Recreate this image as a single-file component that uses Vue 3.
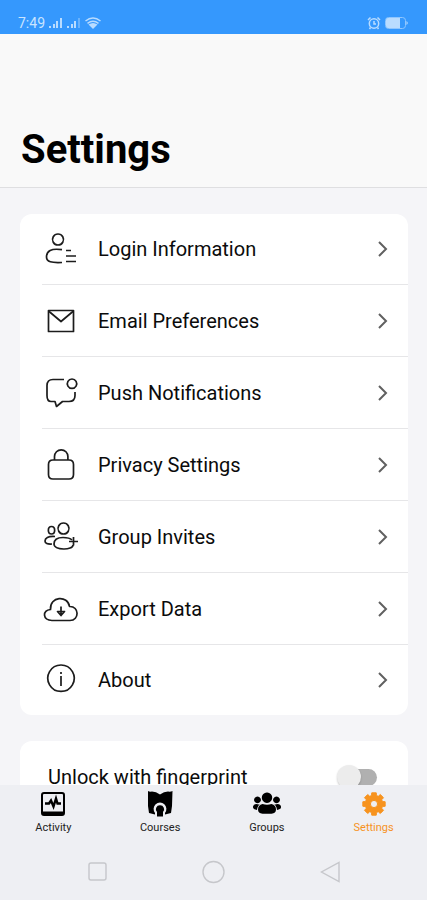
<template>
  <div class="screen">
    <div class="status-bar">
      <div class="status-group">
        <span class="clock">7:49</span>
        <svg class="signal" width="14" height="12" viewBox="0 0 14 12">
          <path d="M0 9h2v2H0zM4 7h2v4H4zM7 4h2v7H7zM11 1h2v10h-2z" />
        </svg>
        <svg class="signal" width="14" height="12" viewBox="0 0 14 12">
          <path d="M0 9h2v2H0zM4 7h2v4H4zM7 4h2v7H7z" />
          <path d="M11 1h2v10h-2z" opacity="0.4" />
        </svg>
        <svg class="wifi" width="16" height="12" viewBox="0 0 16 12">
          <path class="wifi-fill" d="M3.500 7.500Q8 4.500 12.500 7.500L8 12z" />
          <path d="M.5 4Q8-2 15.500 4M2.500 6.300Q8 2 13.500 6.300" />
        </svg>
      </div>
      <div class="status-group">
        <svg class="alarm" width="14" height="14" viewBox="0 0 14 14">
          <circle cx="7" cy="7.500" r="4.700" />
          <path d="M7 5v3h2M1 4l2.500-2.500M13 4l-2.500-2.500M3.500 11.500L2.500 13M10.500 11.500l1 1.500" />
        </svg>
        <svg class="battery" width="24" height="12" viewBox="0 0 24 12">
          <rect x="0.500" y="0.500" width="20" height="11" rx="3" fill="none" stroke="#8fc6ff" />
          <path d="M3 1h12v10H3q-2 0-2-2V3Q1 1 3 1zM21.500 4q2.500 2 0 4z" />
        </svg>
      </div>
    </div>

    <header class="header">
      <h1>Settings</h1>
    </header>

    <main class="content">
      <ul class="card">
        <li v-for="item in items" :key="item.label">
          <button type="button" class="row">
            <svg class="row-icon" width="36" height="36" viewBox="0 0 36 36">
              <path v-for="(d, i) in item.paths" :key="i" :d="d" />
            </svg>
            <span class="row-label">{{ item.label }}</span>
            <svg class="chevron" width="12" height="18" viewBox="0 0 12 18">
              <path d="M2 2l7 7-7 7" />
            </svg>
          </button>
        </li>
      </ul>

      <div class="card">
        <label class="toggle-row" for="fingerprint">
          <span>Unlock with fingerprint</span>
          <input id="fingerprint" v-model="fingerprint" class="switch" type="checkbox" role="switch" />
        </label>
      </div>
    </main>

    <nav class="tabs">
      <button
        v-for="tab in tabs"
        :key="tab.label"
        type="button"
        class="tab"
        :class="{ 'is-active': tab.label === activeTab }"
        @click="activeTab = tab.label"
      >
        <svg width="28" height="26" viewBox="0 0 28 26">
          <path :d="tab.path" fill-rule="evenodd" />
          <path v-if="tab.gap" class="tab-gap" :d="tab.gap" />
          <path v-if="tab.badge" :d="tab.badge" />
          <path v-if="tab.line" class="tab-line" :d="tab.line" />
        </svg>
        <span>{{ tab.label }}</span>
      </button>
    </nav>

    <div class="system-nav">
      <button type="button" aria-label="Recent apps">
        <svg width="24" height="24" viewBox="0 0 24 24"><rect x="4" y="3" width="17" height="17" rx="2" /></svg>
      </button>
      <button type="button" aria-label="Home">
        <svg width="24" height="24" viewBox="0 0 24 24"><circle cx="12.500" cy="12" r="10.500" /></svg>
      </button>
      <button type="button" aria-label="Back">
        <svg width="24" height="24" viewBox="0 0 24 24"><path d="M21 2.500v19L3.500 12z" /></svg>
      </button>
    </div>
  </div>
</template>

<script setup>
import { ref } from 'vue'

const fingerprint = ref(false)
const activeTab = ref('Settings')

const items = [
  {
    label: 'Login Information',
    paths: [
      'M15 3a5.500 5.500 0 1 0 .01 0z',
      'M19 18.700C8 17 3.500 20 3.500 26c0 5 5 6 15.500 5.500',
      'M23 19.500h5M23 25h10M23 30.500h10'
    ]
  },
  {
    label: 'Email Preferences',
    paths: ['M5.500 7.500h25v21h-25z', 'M5.500 8L18 18.500 30.500 8']
  },
  {
    label: 'Push Notifications',
    paths: [
      'M21 4.500H10Q4 4.500 4 10.500v10Q4 26.500 8 26.500h4l1.500 5 6-5H26q6 0 6-6V17',
      'M29 4a4.700 4.700 0 1 0 .01 0z'
    ]
  },
  {
    label: 'Privacy Settings',
    paths: [
      'M10 13h16q4.500 0 4.500 4.500v10Q30.500 32 26 32H10q-4.500 0-4.500-4.500v-10Q5.500 13 10 13z',
      'M11.500 13V9.500a6.700 6.700 0 0 1 13.400 0V13'
    ]
  },
  {
    label: 'Group Invites',
    paths: [
      'M20.500 4a5.500 5.500 0 1 0 .01 0z',
      'M8.500 7.500c-4.200 0-4.200 7.500 0 7.500s4.200-7.500 0-7.500z',
      'M12 17.500C5 17 2 19 2 22q0 3.500 7 3',
      'M29 21c-2-2-5-2.500-9-2.500-6 0-9 2.500-9 6.500 0 6.500 19 6.500 19 1',
      'M30.500 18v8.500M26 22.500h9'
    ]
  },
  {
    label: 'Export Data',
    paths: [
      'M9 29.500C-.5 29.500-1 19 7.500 18.500 6.500 5 25 4 26.500 15.500c10-.5 10 14 .5 14z',
      'M18 15.500v8M14.500 20.500l3.500 4 3.500-4z'
    ]
  },
  {
    label: 'About',
    paths: ['M18 3a13.200 13.200 0 1 0 .01 0z', 'M18 14v10M18 10v2']
  }
]

// cog outline: eight teeth around a ring, with the hub cut out
function gearPath(cx, cy, outer, inner, hole) {
  const pts = []
  for (let i = 0; i < 8; i++) {
    const a = (i * Math.PI) / 4
    for (const [r, off] of [[inner, -0.28], [outer, -0.2], [outer, 0.2], [inner, 0.28]]) {
      pts.push(`${(cx + r * Math.cos(a + off)).toFixed(2)} ${(cy + r * Math.sin(a + off)).toFixed(2)}`)
    }
  }
  return `M${pts.join('L')}z M${cx - hole} ${cy}a${hole} ${hole} 0 1 0 ${hole * 2} 0a${hole} ${hole} 0 1 0 ${-hole * 2} 0z`
}

const tabs = [
  {
    label: 'Activity',
    path: 'M5 1h18q3 0 3 3v18q0 3-3 3H5q-3 0-3-3V4q0-3 3-3zM5 3q-1 0-1 1v16.500h20V4q0-1-1-1z',
    line: 'M6 12.500h4l2-3 2.500 6 2.500-8 1.500 5H22'
  },
  {
    label: 'Courses',
    path: 'M2 0q1.500 1 4 .5 4 0 8 3 4-3 8-3 2.500.5 4.500-.5L26 15l-1 7-6 1.500H9L3 22l-1-7z',
    gap: 'M9 25.500V22a6.400 6.400 0 1 1 10 0v3.500z',
    badge: 'M14 14.300a4 4 0 0 1 3 6.800V25.500h-6v-4.400a4 4 0 0 1 3-6.800z'
  },
  {
    label: 'Groups',
    path: 'M14 1.500a5.200 5.200 0 1 0 .01 0zM4.500 5.500a3.400 3.400 0 1 0 .01 0zM23.500 5.500a3.400 3.400 0 1 0 .01 0zM9.500 13q4.500 1.500 9 0 4.500 1 4.500 5.500 0 4-4.500 4.200h-9Q5 22.500 5 18.500 5 14 9.500 13zM3.500 13Q6 14 8 12.800 4.500 14 4 19-.5 18.500 0 15.500 .5 13 3.500 13zM24.500 13q-2.500 1-4.500-.2 3.500 1.200 4 6.200 4.500-.5 4-3.500-.5-2.500-3.500-2.500z'
  },
  {
    label: 'Settings',
    path: gearPath(14, 13, 11.4, 8.8, 3.6)
  }
]
</script>

<style>
body {
  margin: 0;
  background: #f5f5f8;
}
</style>

<style scoped>
.screen {
  display: flex;
  flex-direction: column;
  height: 100vh;
  background: #f5f5f8;
  color: #0b0b0b;
  font-family: Roboto, 'Liberation Sans', sans-serif;
}
button {
  margin: 0;
  padding: 0;
  border: 0;
  background: none;
  color: inherit;
  font: inherit;
  cursor: pointer;
}
.status-bar {
  flex: none;
  display: flex;
  align-items: flex-end;
  justify-content: space-between;
  box-sizing: border-box;
  height: 34px;
  padding: 0 18px 3px;
  background: #3598fd;
  color: #c9e4ff;
}
.status-group {
  display: flex;
  align-items: center;
  gap: 4px;
  height: 16px;
}
.clock {
  font-size: 14px;
  line-height: 16px;
}
.status-bar svg {
  fill: #b9dcff;
}
.status-bar .wifi,
.status-bar .alarm {
  fill: none;
  stroke: #b9dcff;
  stroke-width: 1.5;
}
.status-bar .wifi-fill {
  fill: #b9dcff;
  stroke: none;
}
.header {
  flex: none;
  display: flex;
  align-items: flex-end;
  box-sizing: border-box;
  height: 154px;
  padding: 0 21px 13px;
  border-bottom: 1px solid #dfdfe1;
  background: #f9f9f9;
}
h1 {
  margin: 0;
  color: #000;
  font-size: 40px;
  font-weight: 700;
  line-height: 48px;
}
.content {
  flex: 1;
  display: flex;
  flex-direction: column;
  gap: 26px;
  min-height: 0;
  padding: 26px 19px 0 20px;
  overflow-y: auto;
  scrollbar-width: none;
}
.card {
  flex: none;
  margin: 0;
  padding: 0;
  border-radius: 12px;
  background: #fff;
  list-style: none;
}
.card li {
  box-sizing: border-box;
  height: 72px;
  margin-left: 22px;
  border-bottom: 1px solid #e6e6e8;
}
.card li:first-child {
  height: 71px;
}
.card li:last-child {
  height: 70px;
  border-bottom: 0;
}
.row {
  display: flex;
  align-items: center;
  width: 100%;
  height: 100%;
  padding-right: 19px;
  text-align: left;
}
.row-icon {
  flex: none;
  margin-left: 1px;
  fill: none;
  stroke: #1c1c1c;
  stroke-width: 1.7;
  stroke-linejoin: round;
}
.row-label {
  flex: 1;
  margin-left: 19px;
  font-size: 20px;
  line-height: 24px;
}
.chevron {
  flex: none;
  fill: none;
  stroke: #606060;
  stroke-width: 2;
}
.toggle-row {
  display: flex;
  align-items: center;
  justify-content: space-between;
  height: 72px;
  padding: 0 31px 0 28px;
  font-size: 20px;
  line-height: 24px;
}
.switch {
  position: relative;
  appearance: none;
  width: 36px;
  height: 17px;
  margin: 0;
  border-radius: 9px;
  background: #b0b0b0;
  cursor: pointer;
}
.switch::before {
  content: '';
  position: absolute;
  top: -4px;
  left: -4px;
  width: 24px;
  height: 24px;
  border-radius: 50%;
  background: #ececec;
  box-shadow: 0 1px 2px rgba(0, 0, 0, 0.2);
}
.switch:checked::before {
  left: 16px;
}
.tabs {
  flex: none;
  display: grid;
  grid-template-columns: repeat(4, 1fr);
  height: 59px;
  background: #eeeff3;
}
.tab {
  display: flex;
  flex-direction: column;
  align-items: center;
  gap: 4px;
  padding-top: 6px;
  color: #222;
  font-size: 11px;
  line-height: 14px;
}
.tab svg {
  fill: #000;
}
.tab .tab-gap {
  fill: #eeeff3;
}
.tab .tab-line {
  fill: none;
  stroke: #000;
  stroke-width: 2.4;
}
.tab.is-active {
  color: #f7931e;
}
.tab.is-active svg {
  fill: #f7931e;
  stroke: #f7931e;
  stroke-linejoin: round;
}
.system-nav {
  flex: none;
  display: grid;
  grid-template-columns: repeat(3, 1fr);
  height: 56px;
  padding: 0 39px;
  background: #eeeff3;
}
.system-nav button {
  display: flex;
  align-items: center;
  justify-content: center;
}
.system-nav svg {
  fill: none;
  stroke: #c6c7cb;
  stroke-width: 1.4;
}
</style>
